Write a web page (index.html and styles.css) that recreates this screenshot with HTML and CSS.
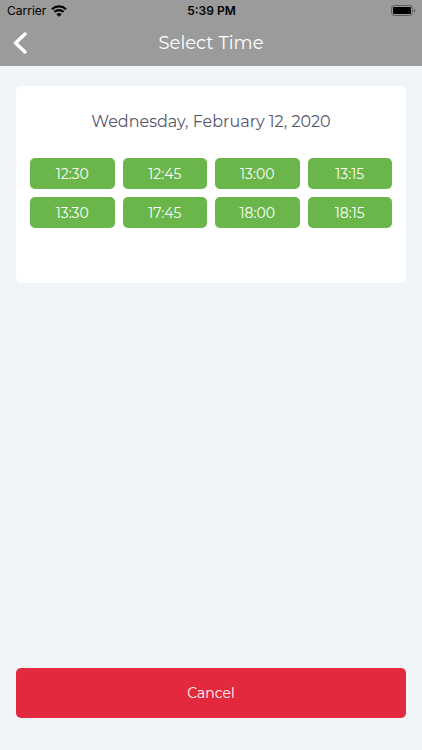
FILE: index.html
```html
<!DOCTYPE html>
<html lang="en">
<head>
<meta charset="utf-8">
<meta name="viewport" content="width=device-width, initial-scale=1">
<title>Select Time</title>
<link rel="stylesheet" href="styles.css">
</head>
<body>
<header class="top">
  <div class="status">
    <div class="carrier"><span>Carrier</span>
      <svg width="16" height="12" viewBox="0 0 16 12" aria-hidden="true"><path d="M1 4.200a10.200 10.200 0 0 1 14 0M3.400 6.900a6.800 6.800 0 0 1 9.200 0" fill="none" stroke="#000" stroke-width="2.200"/><path d="M8 11.800 5.400 9.200a3.700 3.700 0 0 1 5.200 0z"/></svg>
    </div>
    <strong class="clock">5:39 PM</strong>
    <svg class="battery" width="25" height="12" viewBox="0 0 25 12" aria-hidden="true"><rect x=".5" y=".5" width="21" height="10" rx="3" fill="none" stroke="#5c5c5c"/><rect x="2" y="2" width="18" height="7" rx="1"/><path d="M23 4v3.500q1.300-.4 1.300-1.750T23 4" fill="#555"/></svg>
  </div>
  <div class="nav">
    <button class="back" aria-label="Back"><svg width="14" height="22" viewBox="0 0 14 22" aria-hidden="true"><path d="M12 2 2.500 11l9.500 9" fill="none" stroke="#fff" stroke-width="3.500" stroke-linecap="round" stroke-linejoin="round"/></svg></button>
    <h1>Select Time</h1>
  </div>
</header>
<main>
  <section class="card">
    <h2>Wednesday, February 12, 2020</h2>
    <div class="slots">
      <button>12:30</button><button>12:45</button><button>13:00</button><button>13:15</button>
      <button>13:30</button><button>17:45</button><button>18:00</button><button>18:15</button>
    </div>
  </section>
  <button class="cancel">Cancel</button>
</main>
</body>
</html>
```
FILE: styles.css
```css
* { box-sizing: border-box; }
body {
  margin: 0;
  min-height: 100vh;
  display: flex;
  flex-direction: column;
  background: #f0f4f7;
  font-family: Montserrat, "Open Sans", sans-serif;
}
button { border: 0; padding: 0; font: inherit; color: #fff; cursor: pointer; }
.top { background: #9b9b9b; }
.status {
  display: grid;
  grid-template-columns: 1fr auto 1fr;
  align-items: center;
  height: 22px;
  padding: 0 6px 0 7px;
  font: 12px/22px Inter, sans-serif;
  color: #000;
}
.carrier { display: flex; align-items: center; gap: 5px; }
.clock { font-weight: 600; }
.battery { justify-self: end; }
.nav {
  display: grid;
  grid-template-columns: 40px 1fr 40px;
  align-items: center;
  height: 44px;
  padding-bottom: 2px;
}
.back { display: flex; justify-content: center; background: none; }
h1 { margin: 0; text-align: center; font-size: 18px; font-weight: 400; color: #fff; }
main { flex: 1; display: flex; flex-direction: column; padding: 20px 16px 32px; }
.card { background: #fff; border-radius: 5px; padding: 24px 14px 55px; }
h2 { margin: 0 0 24px; text-align: center; font-size: 16px; line-height: 24px; font-weight: 400; color: #56566a; }
.slots { display: grid; grid-template-columns: repeat(4, 1fr); gap: 8px; }
.slots button { height: 31px; border-radius: 5px; background: #6ab64a; font-size: 14px; }
.cancel { margin-top: auto; height: 50px; border-radius: 5px; background: #e3293d; font-size: 14px; }
```
